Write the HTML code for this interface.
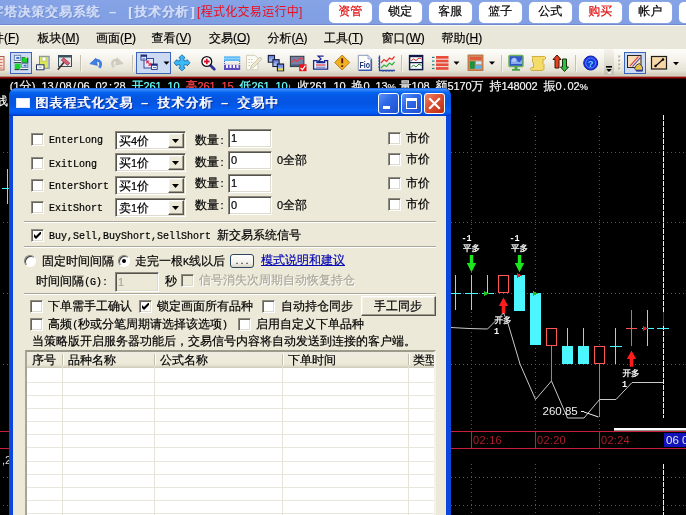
<!DOCTYPE html><html><head><meta charset="utf-8"><title>图表程式化交易</title><style>
html,body{margin:0;padding:0;background:#000;}
#app{will-change:transform;position:relative;width:686px;height:515px;overflow:hidden;background:#000;
 font-family:"Liberation Sans","WenQuanYi Zen Hei","Noto Sans CJK SC",sans-serif;font-size:12px;line-height:14px;color:#000;}
#app *{box-sizing:border-box;}
.abs{position:absolute;white-space:nowrap;}
.l{font-family:"Liberation Mono","WenQuanYi Zen Hei",monospace;font-size:10px;display:inline-block;transform:scale(1,1.18);transform-origin:0 72%;letter-spacing:0;white-space:pre;}
.d{font-family:"Liberation Sans","WenQuanYi Zen Hei",sans-serif;font-size:11px;display:inline-block;width:6px;text-align:center;white-space:pre;}
/* main title */
#tbar{position:absolute;left:0;top:0;width:686px;height:25px;background:linear-gradient(#86a3e6 0%,#82a0e4 50%,#819ee2 100%);border-bottom:1px solid #7189cb;}
.tt{position:absolute;top:4px;height:16px;line-height:16px;font-size:13px;color:#d6e0f8;letter-spacing:0.7px;text-shadow:1px 0 0 #d6e0f8,2px 1px 0 #6f89cc;white-space:nowrap;}
.tb{-webkit-text-stroke:0.2px currentColor;position:absolute;top:2px;width:43.5px;height:20.5px;background:#fff;border-radius:5px;text-align:center;line-height:18px;font-size:12px;box-shadow:0 0 1px #c8d4f4;white-space:nowrap;}
/* menu */
#menu{position:absolute;left:0;top:25px;width:686px;height:24px;background:#e9e7d9;border-top:1px solid #f6f8fd;}
.mi{-webkit-text-stroke:0.2px currentColor;position:absolute;top:5px;height:14px;line-height:14px;font-size:12px;white-space:nowrap;}
.mi u{text-decoration:underline;}
/* toolbar */
#tool{position:absolute;left:0;top:49px;width:686px;height:27px;background:linear-gradient(#fdfdfb 0%,#f4f2ea 40%,#e6e3d5 80%,#d6d1c0 92%,#cdc7b5 100%);}
/* dialog */
#dlg{position:absolute;left:9px;top:88px;width:442px;height:440px;border-radius:8px 8px 0 0;background:#0b47dc;overflow:hidden;}
#cap{position:absolute;left:0;top:0;width:442px;height:28px;background:linear-gradient(#0b56e2 0%,#3f8df8 5%,#1e79f8 10%,#0665f0 16%,#0458e4 28%,#0355e2 50%,#0458ea 65%,#0562f6 80%,#0358ee 90%,#0045d4 96%,#003ac8 100%);}
.ct{position:absolute;top:7px;height:16px;line-height:16px;font-size:13px;color:#fff;letter-spacing:1px;text-shadow:1px 0 0 #fff,2px 1px 0 #0a2f9c,1px 1px 0 #0a2f9c;white-space:nowrap;}
#cli{position:absolute;left:4px;top:28px;width:433px;height:420px;background:#ece9d8;}
.cb{position:absolute;width:13px;height:13px;background:#fff;border:1px solid;border-color:#8e8c80 #fff #fff #8e8c80;box-shadow:inset 1px 1px 0 #66645c,inset -1px -1px 0 #dedbce;}
.sunk{position:absolute;background:#fff;border:1px solid;border-color:#8a887c #fff #fff #8a887c;box-shadow:inset 1px 1px 0 #55534c,inset -1px -1px 0 #dedbce;}
.raised{position:absolute;background:#ece9d8;border:1px solid;border-color:#fff #55534c #55534c #fff;box-shadow:inset -1px -1px 0 #a09d90,inset 1px 1px 0 #f4f2e8;}
.lab{-webkit-text-stroke:0.2px currentColor;position:absolute;height:14px;line-height:14px;font-size:12px;white-space:nowrap;}
.sep{position:absolute;height:2px;border-top:1px solid #aca899;border-bottom:1px solid #fff;}
.rd{position:absolute;width:12px;height:12px;border-radius:50%;background:#fff;border:1px solid;border-color:#808080 #fff #fff #808080;box-shadow:inset 1px 1px 0 #404040;}
</style></head><body><div id="app">
<div id="tbar">
<div class="tt" style="left:-10px">字塔决策交易系统</div>
<div class="tt" style="left:109px;font-weight:bold;text-shadow:none">–</div>
<div class="tt" style="left:128px">[</div>
<div class="tt" style="left:134px">技术分析</div>
<div class="tt" style="left:190.5px">]</div>
<div class="tt" style="left:197px;font-family:'Liberation Sans','Noto Sans CJK SC',sans-serif;font-size:12px;color:#ee0c1c;text-shadow:none;letter-spacing:0.3px;top:4px">[程式化交易运行中]</div>
<div class="tb" style="left:328.5px;color:#e01010">资管</div>
<div class="tb" style="left:378.5px;color:#000">锁定</div>
<div class="tb" style="left:428.5px;color:#000">客服</div>
<div class="tb" style="left:478.5px;color:#000">篮子</div>
<div class="tb" style="left:528.5px;color:#000">公式</div>
<div class="tb" style="left:578.5px;color:#e01010">购买</div>
<div class="tb" style="left:628.5px;color:#000">帐户</div>
<div class="tb" style="left:678.5px;color:#000">委托</div>
</div>
<div id="menu">
<div class="mi" style="left:-20px">文件(<u>F</u>)</div>
<div class="mi" style="left:37.5px">板块(<u>M</u>)</div>
<div class="mi" style="left:96px">画面(<u>P</u>)</div>
<div class="mi" style="left:151.5px">查看(<u>V</u>)</div>
<div class="mi" style="left:209px">交易(<u>O</u>)</div>
<div class="mi" style="left:267.5px">分析(<u>A</u>)</div>
<div class="mi" style="left:324px">工具(<u>T</u>)</div>
<div class="mi" style="left:381.5px">窗口(<u>W</u>)</div>
<div class="mi" style="left:441.5px">帮助(<u>H</u>)</div>
</div>
<div id="tool">
<svg class="abs" style="left:0;top:0" width="686" height="27" viewBox="0 49 686 27" font-family="'Liberation Sans',sans-serif">
<rect x="-6" y="56.500" width="10" height="13.500" fill="#f9e0d6" stroke="#a45444" stroke-width=".9"/><path d="M-4 59.500h6.500M-4 62.500h6.500M-4 65.500h6.500M-4 68h6.500" stroke="#dc6c5c" stroke-width="1.200"/>
<rect x="10.500" y="52.500" width="21" height="21" fill="#cddaf3" stroke="#3c64b8"/>
<rect x="14.300" y="55.300" width="6.400" height="5.200" fill="#dfe9f5" stroke="#5878a0" stroke-width=".8"/><rect x="16.300" y="57" width="3" height="2" fill="#4472c4"/>
<rect x="13.800" y="61.100" width="7.400" height="1.200" fill="#fff"/><rect x="13.800" y="62.200" width="7.400" height=".9" fill="#101828"/>
<rect x="22" y="57.300" width="5.500" height="5.300" fill="#18d42c" stroke="#1c5c30" stroke-width=".6"/><rect x="25.300" y="57.100" width="2.200" height="1.100" fill="#ecf48c"/>
<rect x="14.700" y="63.700" width="5.900" height="5.400" fill="#18d42c"/>
<rect x="21.800" y="63.400" width="6" height="4.300" fill="#dfe9f5" stroke="#5878a0" stroke-width=".8"/><rect x="23.600" y="64.700" width="3" height="1.800" fill="#4472c4"/>
<rect x="20.300" y="68.200" width="7.800" height="1.100" fill="#fff"/><rect x="20.300" y="69.200" width="7.800" height=".9" fill="#101828"/><rect x="14.500" y="69.200" width="5" height=".9" fill="#101828"/>
<rect x="27.400" y="58" width=".9" height="5" fill="#203870"/>
<rect x="39.500" y="56.300" width="9.700" height="12" fill="#dce85c" stroke="#7c8ca4" stroke-width="1"/><rect x="47.800" y="57" width="1.600" height="11" fill="#a8b4c0"/>
<rect x="42" y="57" width="4" height="4" fill="#fff" stroke="#8c9c50" stroke-width=".5"/>
<rect x="36.500" y="64.800" width="7.500" height="5" fill="#fff" stroke="#203060" stroke-width="1"/><rect x="38.500" y="66.500" width="3.500" height="1.500" fill="#c0c8d8"/>
<rect x="58.500" y="55.500" width="13" height="11" fill="#dfe9e9" stroke="#3a5058" stroke-width="1"/><rect x="58.500" y="55.500" width="13" height="2" fill="#3a5058"/>
<path d="M57.800 69.700l6.400-7.700" stroke="#3c2c24" stroke-width="1.600"/><path d="M61.300 60.200l2.200-2.400l6.200 5.200l-2 2.400z" fill="#dc5c72" stroke="#8c3446" stroke-width=".7"/>
<rect x="80" y="55" width="1" height="16.500" fill="#c6c2b2"/><rect x="81" y="55.500" width="1" height="16.500" fill="#f6f4ee"/>
<path d="M99.300 67.800c2.800-4.400 1.200-8.600-4.600-7.200" stroke="#3f80e4" stroke-width="2.700" fill="none"/><path d="M89.800 63.800l6.200-5.800l1.400 7.400z" fill="#3f80e4" stroke="#2c64c4" stroke-width=".5"/>
<path d="M113.700 67.300c-2.800-4.400-1.200-8.400 4.600-7" stroke="#d0cdc0" stroke-width="2.700" fill="none"/><path d="M123.200 63.600l-6.200-5.800l-1.400 7.400z" fill="#d0cdc0" stroke="#c0bdb0" stroke-width=".5"/>
<rect x="132" y="55" width="1" height="16.500" fill="#c6c2b2"/><rect x="133" y="55.500" width="1" height="16.500" fill="#f6f4ee"/>
<rect x="136.5" y="52.5" width="34" height="21" fill="#cddaf3" stroke="#3c64b8"/>
<rect x="144" y="58.500" width="9.500" height="9.500" fill="#e4eafa" stroke="#283890" stroke-width=".9"/>
<path d="M146.800 61l4 4.300M146.800 61h2.600M146.800 61v2.600M150.800 65.300h-2.600M150.800 65.300v-2.600" stroke="#dc2848" stroke-width="1.100" fill="none"/>
<rect x="141" y="55" width="5.600" height="5" fill="#fff" stroke="#1c2c80" stroke-width=".9"/><rect x="141" y="55" width="5.600" height="1.800" fill="#1c2c80"/>
<rect x="151.600" y="64" width="5.600" height="5.400" fill="#fff" stroke="#1c2c80" stroke-width=".9"/><rect x="151.600" y="64" width="5.600" height="1.800" fill="#1c2c80"/><rect x="153" y="67" width="3" height="1" fill="#4878d0"/><rect x="142.300" y="57.800" width="3" height="1" fill="#4878d0"/>
<path d="M163.5 61.5h6l-3 3.2z" fill="#000"/>
<path d="M182 54.800L185.200 57.800H184V60.800H187.200V59.600L190 62.800L187.200 66V64.800H184V67.800H185.200L182 70.800L178.800 67.800H180V64.800H176.800V66L174 62.800L176.800 59.600V60.800H180V57.800H178.800Z" fill="#3cbaf6" stroke="#1a70b0" stroke-width=".9" stroke-linejoin="round"/>
<path d="M210.300 65.300l4 4" stroke="#30309c" stroke-width="2.800" stroke-linecap="round"/>
<circle cx="206.800" cy="61.500" r="4.900" fill="#fff" stroke="#101018" stroke-width="1.300"/>
<path d="M204 61.500h5.600M206.800 58.700v5.600" stroke="#d81028" stroke-width="1.800"/>
<rect x="224" y="56.300" width="16.200" height="4.700" fill="#5cb8f4"/><rect x="224" y="57.800" width="16.200" height="1.400" fill="#8cd0fa"/><path d="M224.500 61v4M239.700 61v4" stroke="#3860c0" stroke-dasharray="1 1"/>
<rect x="224" y="64.800" width="16.200" height="5.200" fill="#5c4cc0"/>
<rect x="226" y="64.800" width="2" height="3.200" fill="#f4f4ff"/>
<rect x="229.5" y="64.800" width="2" height="3.200" fill="#f4f4ff"/>
<rect x="233" y="64.800" width="2" height="3.200" fill="#f4f4ff"/>
<rect x="236.5" y="64.800" width="2" height="3.200" fill="#f4f4ff"/>
<path d="M246.500 55.300h8.500l3 3v11.500h-11.500z" fill="#fbfaf4" stroke="#cdc8b2" stroke-width=".9"/><path d="M248.500 59.500h5M248.500 62.500h5M248.500 65.500h3" stroke="#c4c0ac" stroke-width=".9" stroke-dasharray="1.500 1"/>
<path d="M250.500 68.500l1-3l8.500-8.500l2 2l-8.500 8.500z" fill="#ece8cc" stroke="#bcb89c" stroke-width=".7"/>
<defs><linearGradient id="sqg" x1="0" y1="0" x2="0" y2="1"><stop offset="0" stop-color="#5c78d4"/><stop offset="1" stop-color="#c0d0f4"/></linearGradient></defs>
<rect x="268.3" y="55.4" width="6.200" height="6.800" fill="url(#sqg)" stroke="#141c3c" stroke-width="1.100"/>
<rect x="272.9" y="59.7" width="6.200" height="6.800" fill="url(#sqg)" stroke="#141c3c" stroke-width="1.100"/>
<rect x="277.4" y="64" width="6.200" height="6.800" fill="url(#sqg)" stroke="#141c3c" stroke-width="1.100"/>
<rect x="278" y="68.500" width="5" height="1.900" fill="#e8e040"/>
<rect x="290.400" y="56.300" width="13.500" height="10.300" fill="#7282a6" stroke="#303848" stroke-width="1"/><rect x="290.900" y="64.500" width="12.500" height="1.600" fill="#4c5878"/>
<path d="M291.500 62.500l3-3l2.500 2l3.500-3.500l3 1.500" stroke="#e83c4c" fill="none" stroke-width="1.100"/>
<rect x="299.200" y="64.300" width="7.300" height="6.900" fill="#e4141c"/><path d="M300.600 67.800l1.800 1.900l3-4" stroke="#fff" fill="none" stroke-width="1.200"/>
<path d="M313.600 60.600h3.400v2h7.600v-2h3v8.600h-14z" fill="#f0f2fc" stroke="#182890" stroke-width="1.300"/>
<path d="M323.600 56.200h-5.400l2.800 2.700l-2.800 2.700h5.400" stroke="#182890" fill="none" stroke-width="1.300"/>
<path d="M316 65h9.500" stroke="#e02828" stroke-width="1.100"/><path d="M316 67.200h9.500" stroke="#5060b8" stroke-width=".9"/>
<path d="M342.200 55l7.500 7.500l-7.500 7.500l-7.500-7.500z" fill="#f2b020" stroke="#b08420" stroke-width="1"/>
<path d="M342.200 58.300v5M342.200 65.300v1.800" stroke="#5c1808" stroke-width="1.900"/>
<path d="M358.300 55.300h9.700l3.700 3.700v11.500h-13.400z" fill="#fff" stroke="#7c8cb4" stroke-width=".9"/><path d="M371.200 59.500v10.800M359 70.200h12.500" stroke="#3858b0" stroke-width="1.500"/><path d="M368 55.300v3.700h3.700" fill="#dfe6f6" stroke="#7c8cb4" stroke-width=".7"/>
<text x="359.500" y="67.500" font-size="9.500" font-weight="bold" fill="#203478" textLength="10.500" lengthAdjust="spacingAndGlyphs">Fio</text>
<path d="M379.500 55.500v15h15.500" stroke="#2848a8" stroke-width="1.300" fill="none"/><path d="M379.500 58h-1.500M379.500 61h-1.500M379.500 64h-1.500M379.500 67h-1.500M383 70.500v1.500M386 70.500v1.500M389 70.500v1.500M392 70.500v1.500" stroke="#2848a8" stroke-width=".8"/>
<path d="M381 63l3-3.500l2.500 2l3-3.500l2.500 1.500l2.500-3" stroke="#e83030" fill="none" stroke-width="1.200"/>
<path d="M381 68l3-3l2.500 1.500l3-3.500l2.500 2l2.500-3" stroke="#30b040" fill="none" stroke-width="1.200"/>
<rect x="401" y="55" width="1" height="16.500" fill="#c6c2b2"/><rect x="402" y="55.500" width="1" height="16.500" fill="#f6f4ee"/>
<rect x="409.600" y="55.600" width="13" height="14" fill="#fff" stroke="#101848" stroke-width="1.500"/><path d="M409.600 62.600h13" stroke="#101848" stroke-width="1.300"/><rect x="409.600" y="55.600" width="13" height="1.600" fill="#101848"/>
<path d="M411 61l2.500-2l2.500 1.500l3-2.500l2.500 1" stroke="#d02828" fill="none" stroke-width="1"/>
<path d="M411 67.500l2.500-2.500l2.500 2l3-3l2.500 1.500" stroke="#208830" fill="none" stroke-width="1"/>
<rect x="436" y="56" width="12.500" height="2.700" fill="#e84c3c"/><rect x="432" y="56.8" width="2.500" height="1.200" fill="#208088"/>
<rect x="436" y="59.7" width="12.500" height="2.700" fill="#e84c3c"/><rect x="432" y="60.5" width="2.500" height="1.200" fill="#208088"/>
<rect x="436" y="63.4" width="12.500" height="2.700" fill="#e84c3c"/><rect x="432" y="64.2" width="2.500" height="1.200" fill="#208088"/>
<rect x="436" y="67.1" width="12.500" height="2.700" fill="#e84c3c"/><rect x="432" y="67.9" width="2.500" height="1.200" fill="#208088"/>
<path d="M453.5 61.5h6l-3 3.2z" fill="#000"/>
<rect x="468" y="55" width="15" height="15.500" fill="#d08858" stroke="#b06838" stroke-width=".8"/>
<rect x="470" y="57" width="11.500" height="2.800" fill="#e05838"/><rect x="470" y="61.300" width="4.800" height="7.500" fill="#1c9040"/>
<rect x="476" y="61.300" width="5.500" height="3" fill="#c8e4f8"/><rect x="476" y="65.300" width="5.500" height="3.500" fill="#58b0ec"/>
<path d="M489 61.5h6l-3 3.2z" fill="#000"/>
<rect x="501" y="55" width="1" height="16.500" fill="#c6c2b2"/><rect x="502" y="55.500" width="1" height="16.500" fill="#f6f4ee"/>
<rect x="509" y="55.500" width="14" height="11" rx="1" fill="#3458cc" stroke="#68b058" stroke-width="1.500"/><path d="M511 60c2-3 5-3 6 0s3 3 5-1v5h-11z" fill="#98b8f4" opacity=".85"/><circle cx="514" cy="60" r="2" fill="#c4d8fc" opacity=".7"/>
<path d="M514.500 67h3v2h2.500v1.800h-8v-1.800h2.500z" fill="#48a048"/>
<path d="M532 56.500h12.500c1.500 0 1.500 3 0 3h-1.500v4l1 1v4c0 2-2 2-3 2h-9c-2 0-2-3 0-3h1.500v-4.500l-1-1v-3.500c0-1 -.5-2-.5-2z" fill="#f4dc68" stroke="#c8a838" stroke-width=".9"/>
<path d="M557 55l4 4.500h-2v8.500h-4v-8.500h-2z" fill="#e84020" stroke="#401808" stroke-width="1"/>
<path d="M564.500 71.500l4-4.500h-2v-8h-4v8h-2z" fill="#30c040" stroke="#183010" stroke-width="1"/>
<rect x="575" y="55" width="1" height="16.500" fill="#c6c2b2"/><rect x="576" y="55.500" width="1" height="16.500" fill="#f6f4ee"/>
<circle cx="590.700" cy="63" r="7" fill="#1838e0" stroke="#0818a8" stroke-width="1"/><circle cx="590.700" cy="63" r="5" fill="none" stroke="#6888ff" stroke-width=".9"/>
<text x="590.700" y="66.600" font-size="9.500" font-weight="bold" fill="#68d8ff" text-anchor="middle">?</text>
<defs><linearGradient id="ovg" x1="0" y1="0" x2="0" y2="1"><stop offset="0" stop-color="#f6f4ee"/><stop offset=".6" stop-color="#dcd9cc"/><stop offset="1" stop-color="#c0bdae"/></linearGradient></defs>
<path d="M604 49h8c1.500 0 2 1 2 2v23c0 1-1 2-2 2h-8z" fill="url(#ovg)"/>
<rect x="606" y="66" width="6" height="1.600" fill="#000"/><path d="M606.300 69h5.400l-2.700 3z" fill="#000"/><path d="M607.500 73.500l2-2l2 2" fill="#fff"/>
<rect x="619" y="56.2" width="2" height="2" fill="#fff"/><rect x="618.300" y="55.5" width="2" height="2" fill="#b4b09c"/>
<rect x="619" y="60.2" width="2" height="2" fill="#fff"/><rect x="618.300" y="59.5" width="2" height="2" fill="#b4b09c"/>
<rect x="619" y="64.2" width="2" height="2" fill="#fff"/><rect x="618.300" y="63.5" width="2" height="2" fill="#b4b09c"/>
<rect x="619" y="68.2" width="2" height="2" fill="#fff"/><rect x="618.300" y="67.5" width="2" height="2" fill="#b4b09c"/>
<rect x="624.5" y="52.5" width="21" height="21" fill="#cddaf3" stroke="#3c64b8"/>
<rect x="627.500" y="55.500" width="13.500" height="12" fill="#f8dcb4" stroke="#282420" stroke-width="1"/>
<path d="M630 66l8.500-9.500" stroke="#d82838" stroke-width="1.100"/><path d="M632.500 66.500l8-9" stroke="#3848c0" stroke-width="1.100"/>
<path d="M634.500 68.500l2-3.500l3-1.500l3 3.500v4h-6z" fill="#e8c040" stroke="#303868" stroke-width=".9"/><path d="M636 70.500h6.500" stroke="#2838a0" stroke-width="1.600"/>
<rect x="651.500" y="56.500" width="15" height="12.500" fill="#f8d8a8" stroke="#201c18" stroke-width="1.200"/>
<path d="M655 66.500l8.500-7.500" stroke="#000" stroke-width="1.100"/><circle cx="655.500" cy="66" r="1.200"/><circle cx="663" cy="59.500" r="1.200"/>
<path d="M673 62h6l-3 3.2z" fill="#000"/>
</svg>
</div>
<div class="abs" style="left:0;top:75px;width:686px;height:1px;background:#d9cfc0"></div>
<div class="abs" style="left:0;top:76px;width:686px;height:1px;background:#b08878"></div>
<div class="abs" style="left:0;top:77px;width:686px;height:1px;background:#9a0808"></div>
<div class="abs" style="left:0;top:78px;width:686px;height:1px;background:#4a0000"></div>
<svg class="abs" style="left:0;top:0" width="686" height="515" viewBox="0 0 686 515" shape-rendering="crispEdges" font-family="'Liberation Sans','WenQuanYi Zen Hei',sans-serif">
<line x1="471.5" y1="116" x2="471.5" y2="431" stroke="#8c3c40" stroke-dasharray="1 3"/>
<line x1="471.5" y1="464" x2="471.5" y2="515" stroke="#8c3c40" stroke-dasharray="1 3"/>
<line x1="535.5" y1="116" x2="535.5" y2="431" stroke="#8c3c40" stroke-dasharray="1 3"/>
<line x1="535.5" y1="464" x2="535.5" y2="515" stroke="#8c3c40" stroke-dasharray="1 3"/>
<line x1="599.5" y1="116" x2="599.5" y2="431" stroke="#8c3c40" stroke-dasharray="1 3"/>
<line x1="599.5" y1="464" x2="599.5" y2="515" stroke="#8c3c40" stroke-dasharray="1 3"/>
<line x1="-1" y1="152.5" x2="686" y2="152.5" stroke="#943c40" stroke-dasharray="1 3"/>
<line x1="-1" y1="222.5" x2="686" y2="222.5" stroke="#943c40" stroke-dasharray="1 3"/>
<line x1="-1" y1="293.5" x2="686" y2="293.5" stroke="#943c40" stroke-dasharray="1 3"/>
<line x1="-1" y1="364.5" x2="686" y2="364.5" stroke="#943c40" stroke-dasharray="1 3"/>
<line x1="-1" y1="477.5" x2="686" y2="477.5" stroke="#943c40" stroke-dasharray="1 3"/>
<line x1="-1" y1="505.5" x2="686" y2="505.5" stroke="#943c40" stroke-dasharray="1 3"/>
<line x1="0" y1="431.5" x2="686" y2="431.5" stroke="#c81e3a"/>
<line x1="0" y1="448.5" x2="686" y2="448.5" stroke="#c81e3a"/>
<line x1="471.5" y1="432" x2="471.5" y2="448" stroke="#c81e3a"/>
<text x="473" y="444" font-size="11" letter-spacing="0.3" fill="#b01c28">02:16</text>
<line x1="535.5" y1="432" x2="535.5" y2="448" stroke="#c81e3a"/>
<text x="537" y="444" font-size="11" letter-spacing="0.3" fill="#b01c28">02:20</text>
<line x1="599.5" y1="432" x2="599.5" y2="448" stroke="#c81e3a"/>
<text x="601" y="444" font-size="11" letter-spacing="0.3" fill="#b01c28">02:24</text>
<rect x="664" y="433" width="22" height="14" fill="#1212b8"/>
<text x="666" y="444" font-size="11.5" fill="#e8e8f8">06 0</text>
<rect x="614" y="428" width="72" height="2" fill="#fff"/>
<rect x="614" y="430" width="72" height="1" fill="#909090"/>
<line x1="663.5" y1="115" x2="663.5" y2="418" stroke="#f0f0f0" stroke-dasharray="5 1"/>
<line x1="663.5" y1="464" x2="663.5" y2="515" stroke="#f0f0f0" stroke-dasharray="5 1"/>
<line x1="7.5" y1="169" x2="7.5" y2="204" stroke="#4cf6ff"/>
<line x1="2" y1="188.5" x2="10" y2="188.5" stroke="#4cf6ff"/>
<line x1="455.5" y1="275" x2="455.5" y2="310" stroke="#4cf6ff"/>
<line x1="451" y1="293.5" x2="461" y2="293.5" stroke="#4cf6ff"/>
<line x1="471.5" y1="275" x2="471.5" y2="310" stroke="#4cf6ff"/>
<line x1="465" y1="293.5" x2="478" y2="293.5" stroke="#4cf6ff"/>
<line x1="487.5" y1="275" x2="487.5" y2="294" stroke="#4cf6ff"/>
<line x1="482" y1="293.5" x2="494" y2="293.5" stroke="#4cf6ff"/>
<rect x="498.5" y="275.5" width="10" height="17" fill="#000" stroke="#ff5656"/>
<rect x="514" y="275" width="11" height="36" fill="#4cf6ff"/>
<rect x="530" y="293" width="11" height="52" fill="#4cf6ff"/>
<line x1="551.5" y1="345" x2="551.5" y2="381" stroke="#ff5656"/>
<rect x="546.5" y="328.5" width="10" height="17" fill="#000" stroke="#ff5656"/>
<line x1="567.5" y1="328" x2="567.5" y2="346" stroke="#4cf6ff"/>
<rect x="562" y="346" width="11" height="18" fill="#4cf6ff"/>
<line x1="583.5" y1="328" x2="583.5" y2="346" stroke="#4cf6ff"/>
<rect x="578" y="346" width="11" height="18" fill="#4cf6ff"/>
<line x1="599.5" y1="364" x2="599.5" y2="417" stroke="#ff5656"/>
<rect x="594.5" y="346.5" width="10" height="17" fill="#000" stroke="#ff5656"/>
<line x1="615.5" y1="328" x2="615.5" y2="364" stroke="#4cf6ff"/>
<line x1="610" y1="346.5" x2="622" y2="346.5" stroke="#4cf6ff"/>
<line x1="631.5" y1="310" x2="631.5" y2="346" stroke="#ff5656"/>
<line x1="626" y1="328.5" x2="637" y2="328.5" stroke="#ff5656"/>
<line x1="647.5" y1="310" x2="647.5" y2="346" stroke="#4cf6ff"/>
<line x1="642" y1="328.5" x2="654" y2="328.5" stroke="#4cf6ff"/>
<line x1="657" y1="328.5" x2="669" y2="328.5" stroke="#4cf6ff"/>
<line x1="663.5" y1="312" x2="663.5" y2="326" stroke="#8c1c1c"/>
<path d="M484 291l5 2.5l-5 2.5z" fill="#20c020"/>
<path d="M533 291l5 2.5l-5 2.5z" fill="#20c020"/>
<path d="M517 273l5 2.5l-5 2.5z" fill="#e02020"/>
<path d="M643 326l5 2.5l-5 2.5z" fill="#e02020"/>
<path d="M469.8 255h3.4v8h3l-4.700 9.200l-4.700 -9.200h3z" fill="#1ce61c" shape-rendering="geometricPrecision"/>
<path d="M517.8 255h3.4v8h3l-4.700 9.200l-4.700 -9.200h3z" fill="#1ce61c" shape-rendering="geometricPrecision"/>
<path d="M503.5 297.5l4.600 8.600h-2.800v7.600h-3.600v-7.600h-2.800z" fill="#ff1c1c" shape-rendering="geometricPrecision"/>
<path d="M631.5 350.5l4.600 8.600h-2.800v7.600h-3.600v-7.600h-2.800z" fill="#ff1c1c" shape-rendering="geometricPrecision"/>
<rect x="461" y="235" width="18" height="19" fill="#000"/>
<text x="463" y="251.300" font-size="8.500" fill="#fff" stroke="#fff" stroke-width=".25">平多</text>
<text x="461.5" y="241" font-size="8.500" fill="#fff" font-weight="bold" font-family="'Liberation Mono',monospace">-1</text>
<rect x="509" y="235" width="18" height="19" fill="#000"/>
<text x="511" y="251.300" font-size="8.500" fill="#fff" stroke="#fff" stroke-width=".25">平多</text>
<text x="509.5" y="241" font-size="8.500" fill="#fff" font-weight="bold" font-family="'Liberation Mono',monospace">-1</text>
<text x="494.500" y="323" font-size="8.500" fill="#fff" stroke="#fff" stroke-width=".25">开多</text>
<text x="494" y="333.700" font-size="8.500" fill="#fff" font-weight="bold" font-family="'Liberation Mono',monospace">1</text>
<text x="622.500" y="376" font-size="8.500" fill="#fff" stroke="#fff" stroke-width=".25">开多</text>
<text x="622" y="386.700" font-size="8.500" fill="#fff" font-weight="bold" font-family="'Liberation Mono',monospace">1</text>
<polyline fill="none" stroke="#c8c8c8" stroke-width="1" shape-rendering="geometricPrecision" points="451,327.5 469,328.5 487.5,329 503.5,313 507.7,322.5 520,364 535.5,399.5 551.5,381 567.5,418 584,418 599.5,399.5 616,399.5 632,382.5 663,382.5"/>
<text x="542.5" y="415" font-size="11.5" fill="#f0f0f0">260.85</text>
<path d="M581 411.5h3M584 412l14.5 5" stroke="#f0f0f0" fill="none" shape-rendering="geometricPrecision"/>
<text x="2" y="464" font-size="11" fill="#ddd">,2</text>
</svg>
<div class="lab" style="left:9.5px;top:79px;color:#f4f4f4"><span class="d" style="width:4px;">(</span><span class="d" style="width:6px;">1</span>分<span class="d" style="width:4px;">)</span><span class="d" style="width:6px;"> </span><span class="d">1</span><span class="d">3</span><span class="d">/</span><span class="d">0</span><span class="d">8</span><span class="d">/</span><span class="d">0</span><span class="d">6</span><span class="d"> </span><span class="d">0</span><span class="d">2</span><span class="d">:</span><span class="d">2</span><span class="d">8</span><span class="d"> </span><span style="color:#6ff">开<span class="d">2</span><span class="d">6</span><span class="d">1</span><span class="d">.</span><span class="d">1</span><span class="d">0</span><span class="d"> </span></span><span style="color:#f44">高<span class="d">2</span><span class="d">6</span><span class="d">1</span><span class="d">.</span><span class="d">1</span><span class="d">5</span><span class="d"> </span></span><span style="color:#6ff">低<span class="d">2</span><span class="d">6</span><span class="d">1</span><span class="d">.</span><span class="d">1</span><span class="d">0</span><span class="d" style="width:4px;font-size:9px">↓</span><span class="d" style="width:6px;"> </span></span>收<span class="d">2</span><span class="d">6</span><span class="d">1</span><span class="d">.</span><span class="d">1</span><span class="d">0</span><span class="d"> </span>换<span class="d">0</span><span class="d">.</span><span class="d">1</span><span class="d">3</span><span class="d" style="font-size:9.5px">%</span><span class="d"> </span>量<span class="d">1</span><span class="d">0</span><span class="d">8</span><span class="d"> </span>额<span class="d">5</span><span class="d">1</span><span class="d">7</span><span class="d">0</span>万<span class="d"> </span>持<span class="d">1</span><span class="d">4</span><span class="d">8</span><span class="d">0</span><span class="d">0</span><span class="d">2</span><span class="d"> </span>振<span class="d">0</span><span class="d">.</span><span class="d">0</span><span class="d">2</span><span class="d" style="font-size:9.5px">%</span></div>
<div class="lab" style="left:-4px;top:94px;color:#fff">线</div>
<div id="dlg"><div id="cap">
<div class="abs" style="left:7px;top:10px;width:14px;height:10px;background:#fff;border:1px solid #dfe8ff"></div>
<div class="ct" style="left:26px">图表程式化交易</div>
<div class="ct" style="left:132px;font-weight:bold;text-shadow:1px 1px 0 #0a2f9c">–</div>
<div class="ct" style="left:148px">技术分析</div>
<div class="ct" style="left:212px;font-weight:bold;text-shadow:1px 1px 0 #0a2f9c">–</div>
<div class="ct" style="left:228px">交易中</div>
<div class="abs" style="left:369px;top:5px;width:21px;height:21px;border:1px solid #fff;border-radius:3px;background:linear-gradient(135deg,#5a92f8 0%,#2e6ae8 40%,#2458d8 80%,#2050c8 100%)"><div class="abs" style="left:4px;top:12px;width:7px;height:3px;background:#fff"></div></div>
<div class="abs" style="left:392px;top:5px;width:21px;height:21px;border:1px solid #fff;border-radius:3px;background:linear-gradient(135deg,#5a92f8 0%,#2e6ae8 40%,#2458d8 80%,#2050c8 100%)"><div class="abs" style="left:4px;top:4px;width:11px;height:11px;border:1px solid #fff;border-top:3px solid #fff"></div></div>
<div class="abs" style="left:415px;top:5px;width:21px;height:21px;border:1px solid #fff;border-radius:3px;background:linear-gradient(135deg,#eb8a68 0%,#e0583a 35%,#c83818 80%,#b83010 100%)"><svg class="abs" style="left:0;top:0" width="19" height="19"><path d="M5 5L14 14M14 5L5 14" stroke="#fff" stroke-width="2.2" stroke-linecap="square"/></svg></div>
</div>
<div id="cli"></div>
</div>
<div class="cb" style="left:31px;top:133px"></div>
<div class="lab" style="left:49px;top:132px;"><span class="l">EnterLong</span></div>
<div class="sunk" style="left:115px;top:131px;width:71px;height:19px"></div>
<div class="lab" style="left:119px;top:134px;">买<span class="d">4</span>价</div>
<div class="raised" style="left:168px;top:133px;width:16px;height:15px"><svg class="abs" style="left:3px;top:5px" width="8" height="4"><path d="M0 0h7L3.5 4z" fill="#000"/></svg></div>
<div class="lab" style="left:195px;top:133px;">数量<span class="d">:</span></div>
<div class="sunk" style="left:228px;top:129px;width:44px;height:19px"></div>
<div class="lab" style="left:231px;top:131px;"><span class="d">1</span></div>
<div class="cb" style="left:388px;top:132px"></div>
<div class="lab" style="left:406px;top:131px;">市价</div>
<div class="cb" style="left:31px;top:157px"></div>
<div class="lab" style="left:49px;top:156px;"><span class="l">ExitLong</span></div>
<div class="sunk" style="left:115px;top:153px;width:71px;height:19px"></div>
<div class="lab" style="left:119px;top:156px;">买<span class="d">1</span>价</div>
<div class="raised" style="left:168px;top:155px;width:16px;height:15px"><svg class="abs" style="left:3px;top:5px" width="8" height="4"><path d="M0 0h7L3.5 4z" fill="#000"/></svg></div>
<div class="lab" style="left:195px;top:155px;">数量<span class="d">:</span></div>
<div class="sunk" style="left:228px;top:151px;width:44px;height:19px"></div>
<div class="lab" style="left:231px;top:153px;"><span class="d">0</span></div>
<div class="lab" style="left:277px;top:153px;"><span class="d">0</span>全部</div>
<div class="cb" style="left:388px;top:153px"></div>
<div class="lab" style="left:406px;top:152px;">市价</div>
<div class="cb" style="left:31px;top:179px"></div>
<div class="lab" style="left:49px;top:178px;"><span class="l">EnterShort</span></div>
<div class="sunk" style="left:115px;top:176px;width:71px;height:19px"></div>
<div class="lab" style="left:119px;top:179px;">买<span class="d">1</span>价</div>
<div class="raised" style="left:168px;top:178px;width:16px;height:15px"><svg class="abs" style="left:3px;top:5px" width="8" height="4"><path d="M0 0h7L3.5 4z" fill="#000"/></svg></div>
<div class="lab" style="left:195px;top:176px;">数量<span class="d">:</span></div>
<div class="sunk" style="left:228px;top:174px;width:44px;height:19px"></div>
<div class="lab" style="left:231px;top:176px;"><span class="d">1</span></div>
<div class="cb" style="left:388px;top:177px"></div>
<div class="lab" style="left:406px;top:176px;">市价</div>
<div class="cb" style="left:31px;top:201px"></div>
<div class="lab" style="left:49px;top:200px;"><span class="l">ExitShort</span></div>
<div class="sunk" style="left:115px;top:198px;width:71px;height:19px"></div>
<div class="lab" style="left:119px;top:201px;">卖<span class="d">1</span>价</div>
<div class="raised" style="left:168px;top:200px;width:16px;height:15px"><svg class="abs" style="left:3px;top:5px" width="8" height="4"><path d="M0 0h7L3.5 4z" fill="#000"/></svg></div>
<div class="lab" style="left:195px;top:198px;">数量<span class="d">:</span></div>
<div class="sunk" style="left:228px;top:196px;width:44px;height:19px"></div>
<div class="lab" style="left:231px;top:198px;"><span class="d">0</span></div>
<div class="lab" style="left:277px;top:198px;"><span class="d">0</span>全部</div>
<div class="cb" style="left:388px;top:198px"></div>
<div class="lab" style="left:406px;top:197px;">市价</div>
<div class="sep" style="left:24px;top:221px;width:412px"></div>
<div class="cb" style="left:31px;top:229px"><svg class="abs" style="left:2px;top:2px" width="7" height="7"><path d="M0 2v3l2 2l5-5v-3l-5 5z" fill="#000"/></svg></div>
<div class="lab" style="left:49px;top:228px;"><span class="l">Buy,Sell,BuyShort,SellShort</span><span class="d"> </span>新交易系统信号</div>
<div class="sep" style="left:24px;top:246px;width:412px"></div>
<div class="rd" style="left:24px;top:255px"></div>
<div class="lab" style="left:42px;top:254px;">固定时间间隔</div>
<div class="rd" style="left:118px;top:255px"><div class="abs" style="left:3px;top:3px;width:4px;height:4px;border-radius:50%;background:#000"></div></div>
<div class="lab" style="left:135px;top:254px;">走完一根<span class="l">K</span>线以后</div>
<div class="abs" style="left:230px;top:254px;width:24px;height:14px;border:1px solid #2c4660;border-radius:3px;background:linear-gradient(#fff,#f0efe8 70%,#d8d4c4);text-align:center;line-height:11px;font-size:11px;letter-spacing:2px;padding-left:2px">...</div>
<div class="lab" style="left:261px;top:253px;color:#0808b0;text-decoration:underline">模式说明和建议</div>
<div class="lab" style="left:36px;top:274px;">时间间隔<span class="d">(</span><span class="l">G</span><span class="d">)</span><span class="d">:</span></div>
<div class="sunk" style="left:115px;top:272px;width:44px;height:20px;background:#ece9d8"></div>
<div class="lab" style="left:118px;top:275px;color:#aca899"><span class="d">1</span></div>
<div class="lab" style="left:165px;top:274px;">秒</div>
<div class="cb" style="left:181px;top:274px;background:#ece9d8"></div>
<div class="lab" style="left:199px;top:273px;color:#aca899;text-shadow:1px 1px 0 #fff">信号消失次周期自动恢复持仓</div>
<div class="sep" style="left:24px;top:293px;width:412px"></div>
<div class="cb" style="left:30px;top:300px"></div>
<div class="lab" style="left:48px;top:299px;">下单需手工确认</div>
<div class="cb" style="left:139px;top:300px"><svg class="abs" style="left:2px;top:2px" width="7" height="7"><path d="M0 2v3l2 2l5-5v-3l-5 5z" fill="#000"/></svg></div>
<div class="lab" style="left:157px;top:299px;">锁定画面所有品种</div>
<div class="cb" style="left:262px;top:300px"></div>
<div class="lab" style="left:281px;top:299px;">自动持仓同步</div>
<div class="raised" style="left:361px;top:296px;width:75px;height:20px"></div>
<div class="lab" style="left:374px;top:299px;">手工同步</div>
<div class="cb" style="left:30px;top:318px"></div>
<div class="lab" style="left:48px;top:317px;">高频<span class="d">(</span>秒或分笔周期请选择该选项<span class="d">)</span></div>
<div class="cb" style="left:238px;top:318px"></div>
<div class="lab" style="left:256px;top:317px;">启用自定义下单品种</div>
<div class="lab" style="left:32px;top:334px;">当策略版开启服务器功能后，交易信号内容将自动发送到连接的客户端。</div>
<div class="abs" style="left:25px;top:350px;width:411px;height:180px;overflow:hidden;background:#fff;border:2px solid;border-color:#9c9a8b #f4f2ea #fff #a8a597;box-shadow:none">
<div class="abs" style="left:0;top:0;width:420px;height:16px;background:linear-gradient(#efece0 0,#ece9d8 75%,#e0ddcc 88%,#cbc7b6 100%)"></div>
<div class="lab" style="left:5px;top:1px">序号</div>
<div class="lab" style="left:41px;top:1px">品种名称</div>
<div class="abs" style="left:35px;top:2px;width:2px;height:11px;border-left:1px solid #c3bfad;border-right:1px solid #fff"></div>
<div class="lab" style="left:133px;top:1px">公式名称</div>
<div class="abs" style="left:127px;top:2px;width:2px;height:11px;border-left:1px solid #c3bfad;border-right:1px solid #fff"></div>
<div class="lab" style="left:261px;top:1px">下单时间</div>
<div class="abs" style="left:255px;top:2px;width:2px;height:11px;border-left:1px solid #c3bfad;border-right:1px solid #fff"></div>
<div class="lab" style="left:386px;top:1px">类型</div>
<div class="abs" style="left:381px;top:2px;width:2px;height:11px;border-left:1px solid #c3bfad;border-right:1px solid #fff"></div>
<div class="abs" style="left:0;top:30px;width:420px;height:1px;background:#e9e7dc"></div>
<div class="abs" style="left:0;top:43px;width:420px;height:1px;background:#e9e7dc"></div>
<div class="abs" style="left:0;top:56px;width:420px;height:1px;background:#e9e7dc"></div>
<div class="abs" style="left:0;top:69px;width:420px;height:1px;background:#e9e7dc"></div>
<div class="abs" style="left:0;top:82px;width:420px;height:1px;background:#e9e7dc"></div>
<div class="abs" style="left:0;top:95px;width:420px;height:1px;background:#e9e7dc"></div>
<div class="abs" style="left:0;top:109px;width:420px;height:1px;background:#e9e7dc"></div>
<div class="abs" style="left:0;top:122px;width:420px;height:1px;background:#e9e7dc"></div>
<div class="abs" style="left:0;top:135px;width:420px;height:1px;background:#e9e7dc"></div>
<div class="abs" style="left:0;top:148px;width:420px;height:1px;background:#e9e7dc"></div>
<div class="abs" style="left:0;top:161px;width:420px;height:1px;background:#e9e7dc"></div>
<div class="abs" style="left:35px;top:15px;width:1px;height:170px;background:#e6e3d8"></div>
<div class="abs" style="left:127px;top:15px;width:1px;height:170px;background:#e6e3d8"></div>
<div class="abs" style="left:255px;top:15px;width:1px;height:170px;background:#e6e3d8"></div>
<div class="abs" style="left:381px;top:15px;width:1px;height:170px;background:#e6e3d8"></div>
</div>
</div></body></html>
